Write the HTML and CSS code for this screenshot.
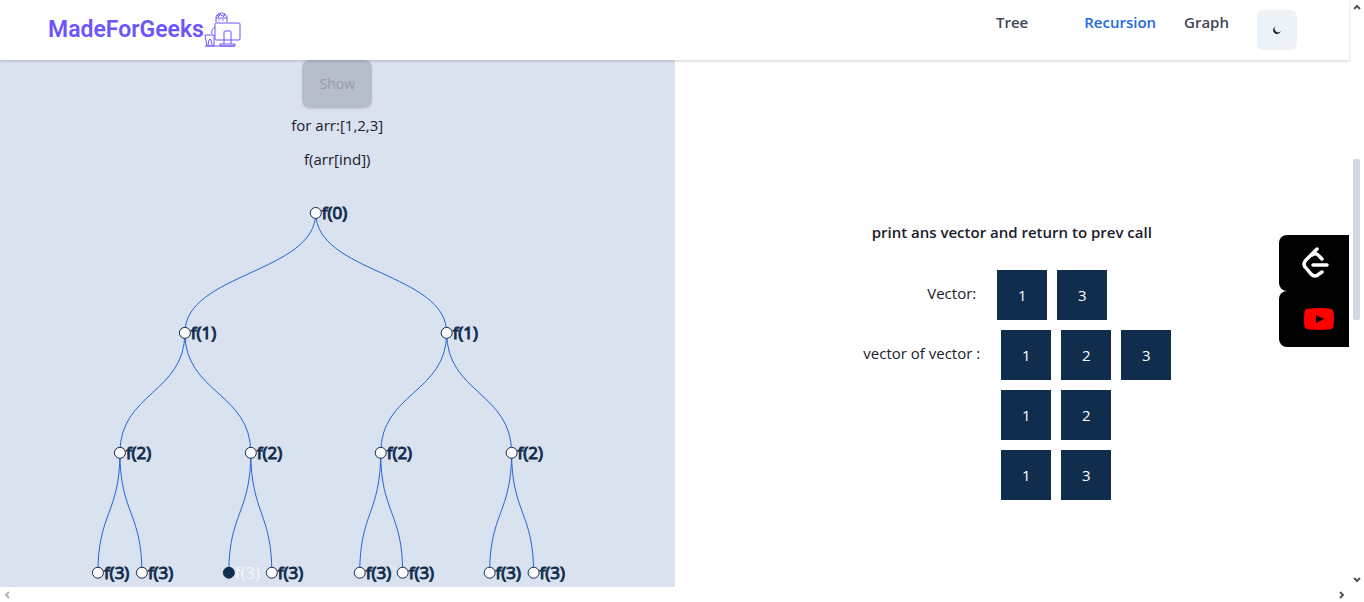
FILE: index.html
```html
<!DOCTYPE html>
<html lang="en">
<head>
<meta charset="utf-8">
<title>MadeForGeeks</title>
<link rel="stylesheet" href="styles.css">
</head>
<body>
<div class="shell">
  <div class="page">
    <header class="header">
      <a class="logo" href="#">MadeForGeeks
        <svg class="logo-art" viewBox="0 0 38 36" fill="none" stroke="#6c55f9" stroke-width="1">
          <path d="M12 10V5.500a5.500 4.500 0 0 1 11 0V10M12 6h11M13 4l3-2 2 2 3-2M14 5l2-2M19 5l2-2"/>
          <path d="M15 7.500v1M19 7.500v1" stroke-width="1.500"/>
          <rect x="11" y="11" width="25" height="17" rx="1"/>
          <path d="M20 32V20q0-1 1-1h5q1 0 1 1v12M16 32h15v2H16zM1 34h30M11 15q-4 2-3 7M1 23h9v11H3zM4 33l1-5q1-2 2 0l1 5"/>
        </svg>
      </a>
      <nav class="nav">
        <a class="nav-link wide" href="#">Tree</a>
        <a class="nav-link active" href="#">Recursion</a>
        <a class="nav-link" href="#">Graph</a>
        <button class="theme" type="button" aria-label="Switch theme">
          <svg width="8" height="8" viewBox="0 0 8 8"><path d="M2.500 .5A3.900 3.900 0 1 0 7.800 5 3.200 3.200 0 0 1 2.500 .5z" fill="#1a202c"/></svg>
        </button>
      </nav>
    </header>
    <main class="main">
      <section class="calls">
        <button class="show" type="button" disabled>Show</button>
        <p class="caption">for arr:[1,2,3]</p>
        <p class="caption">f(arr[ind])</p>
        <svg class="tree" viewBox="0 180 675 407">
          <g class="edges">
            <path d="M316 213C316 273 185 273 185 333"/>
            <path d="M316 213C316 273 447 273 447 333"/>
            <path d="M185 333C185 393 120 393 120 453"/>
            <path d="M185 333C185 393 251 393 251 453"/>
            <path d="M447 333C447 393 381 393 381 453"/>
            <path d="M447 333C447 393 512 393 512 453"/>
            <path d="M120 453C120 513 98 513 98 573"/>
            <path d="M120 453C120 513 142 513 142 573"/>
            <path d="M251 453C251 513 229 513 229 573"/>
            <path d="M251 453C251 513 272 513 272 573"/>
            <path d="M381 453C381 513 360 513 360 573"/>
            <path d="M381 453C381 513 403 513 403 573"/>
            <path d="M512 453C512 513 490 513 490 573"/>
            <path d="M512 453C512 513 534 513 534 573"/>
          </g>
          <g class="nodes">
            <circle cx="316" cy="213" r="5.500"/><text x="322" y="219">f(0)</text>
            <circle cx="185" cy="333" r="5.500"/><text x="191" y="339">f(1)</text>
            <circle cx="447" cy="333" r="5.500"/><text x="453" y="339">f(1)</text>
            <circle cx="120" cy="453" r="5.500"/><text x="126" y="459">f(2)</text>
            <circle cx="251" cy="453" r="5.500"/><text x="257" y="459">f(2)</text>
            <circle cx="381" cy="453" r="5.500"/><text x="387" y="459">f(2)</text>
            <circle cx="512" cy="453" r="5.500"/><text x="518" y="459">f(2)</text>
            <circle cx="98" cy="573" r="5.500"/><text x="104" y="579">f(3)</text>
            <circle cx="142" cy="573" r="5.500"/><text x="148" y="579">f(3)</text>
            <g class="current"><circle cx="229" cy="573" r="5.500"/><text x="235" y="579">f(3)</text></g>
            <circle cx="272" cy="573" r="5.500"/><text x="278" y="579">f(3)</text>
            <circle cx="360" cy="573" r="5.500"/><text x="366" y="579">f(3)</text>
            <circle cx="403" cy="573" r="5.500"/><text x="409" y="579">f(3)</text>
            <circle cx="490" cy="573" r="5.500"/><text x="496" y="579">f(3)</text>
            <circle cx="534" cy="573" r="5.500"/><text x="540" y="579">f(3)</text>
          </g>
        </svg>
      </section>
      <section class="state">
        <h1 class="step">print ans vector and return to prev call</h1>
        <div class="vector">
          <span class="label">Vector:</span>
          <div class="cells"><span class="cell">1</span><span class="cell">3</span></div>
        </div>
        <div class="vector">
          <span class="label">vector of vector :</span>
          <div class="rows">
            <div class="cells"><span class="cell">1</span><span class="cell">2</span><span class="cell">3</span></div>
            <div class="cells"><span class="cell">1</span><span class="cell">2</span></div>
            <div class="cells"><span class="cell">1</span><span class="cell">3</span></div>
          </div>
        </div>
      </section>
    </main>
    <aside class="dock">
      <a class="dock-link leet" href="#" aria-label="LeetCode">
        <svg width="28" height="32" viewBox="0 0 28 32" fill="none" stroke="#fff" stroke-width="3.500" stroke-linecap="round" stroke-linejoin="round"><path d="M15 2 4 13Q0 17 4 21L9 27Q13 31 17 27L20 25M10 8Q14 5 17 9L20 12M11 18H25"/></svg>
      </a>
      <a class="dock-link tube" href="#" aria-label="YouTube">
        <svg width="30" height="22" viewBox="0 0 30 22"><path d="M4 .7Q15-.7 26 .7 29 1 29.500 4 30.500 11 29.500 18 29 21 26 21.300 15 22.700 4 21.300 1 21 .5 18-.5 11 .5 4 1 1 4 .7z" fill="red"/><path d="M12 7l8 4-8 4z" fill="#000"/></svg>
      </a>
    </aside>
  </div>
  <div class="bar-v">
    <svg width="8" height="6" viewBox="0 0 8 6"><path d="M1 5l3-3 3 3"/></svg>
    <div class="thumb"></div>
    <svg width="8" height="6" viewBox="0 0 8 6"><path d="M1 1l3 3 3-3"/></svg>
  </div>
  <div class="bar-h">
    <svg class="off" width="6" height="8" viewBox="0 0 6 8"><path d="M5 1L2 4l3 3"/></svg>
    <svg width="6" height="8" viewBox="0 0 6 8"><path d="M1 1l3 3-3 3"/></svg>
  </div>
</div>
</body>
</html>
```
FILE: styles.css
```css
* { box-sizing: border-box; }
body {
  margin: 0;
  background: #fff;
  color: #1a202c;
  font: 15px/24px "Open Sans", "Noto Sans", sans-serif;
}
a { color: inherit; text-decoration: none; }
svg { display: block; }
button { font: inherit; border: 0; }
.shell {
  display: grid;
  grid-template-columns: 1fr 15px;
  grid-template-rows: 1fr 15px;
  min-height: 100vh;
}
.page { position: relative; display: flex; flex-direction: column; min-width: 0; }
.header {
  position: relative;
  display: flex;
  justify-content: space-between;
  height: 60px;
  padding: 10px 52px 10px 48px;
  background: #fff;
  box-shadow: 0 1px 3px rgba(0, 0, 0, .2);
}
.logo {
  display: flex;
  align-items: center;
  color: #6c55f9;
  font: 600 23px/40px "Roboto", sans-serif;
}
.logo-art { width: 38px; height: 36px; }
.nav { display: flex; align-items: flex-start; gap: 28px; color: #3f4856; }
.nav-link { font-weight: 600; }
.wide { margin-right: 28px; }
.active { color: #2168e8; }
.theme {
  display: grid;
  place-items: center;
  width: 40px;
  height: 40px;
  padding: 0;
  border-radius: 6px;
  background: #edf2f7;
}
.main { display: grid; grid-template-columns: 1fr 1fr; flex: 1; }
.calls {
  display: flex;
  flex-direction: column;
  align-items: center;
  background: #dae1ef;
}
.show {
  height: 48px;
  padding: 0 17px;
  border-radius: 8px;
  background: #b6bdcb;
  color: #969eac;
  font-size: 14px;
  font-weight: 500;
  box-shadow: 0 1px 2px rgba(0, 0, 0, .1);
}
.caption { margin: 5px 0; font-weight: 500; }
.tree { width: 100%; margin-top: 4px; }
.edges path { fill: none; stroke: #2264d6; }
.nodes circle { fill: #fbfbfc; stroke: #112d4e; }
.nodes text { font-size: 17px; fill: #112d4e; stroke: #112d4e; stroke-width: 1px; }
.nodes .current circle { fill: #112d4e; }
.nodes .current text { fill: #f4f5f8; stroke: none; }
.state { display: flex; flex-direction: column; align-items: center; padding-top: 160px; }
.step { margin: 0 0 21px; font-size: 15px; line-height: 24px; font-weight: 600; }
.vector { display: flex; align-items: flex-start; }
.label { padding: 16px; }
.cells { display: flex; }
.cell {
  width: 50px;
  margin: 5px;
  background: #112d4e;
  color: #fff;
  line-height: 50px;
  text-align: center;
}
.dock { position: absolute; top: 235px; right: 0; width: 70px; }
.dock-link {
  display: grid;
  place-items: center;
  height: 56px;
  border-radius: 8px 0 0 8px;
  background: #000;
}
.leet { padding-left: 4px; }
.tube { padding-left: 10px; }
.bar-v {
  position: relative;
  display: flex;
  flex-direction: column;
  justify-content: space-between;
  align-items: center;
  padding: 4px 0;
}
.thumb {
  position: absolute;
  top: 159px;
  width: 7px;
  height: 161px;
  border-radius: 2px;
  background: #cfd9e3;
}
.bar-h { display: flex; justify-content: space-between; align-items: center; padding: 0 4px; }
.bar-v path, .bar-h path { fill: none; stroke: #555; stroke-width: 2; }
.bar-h .off path { stroke: #b5b5b5; }
```
